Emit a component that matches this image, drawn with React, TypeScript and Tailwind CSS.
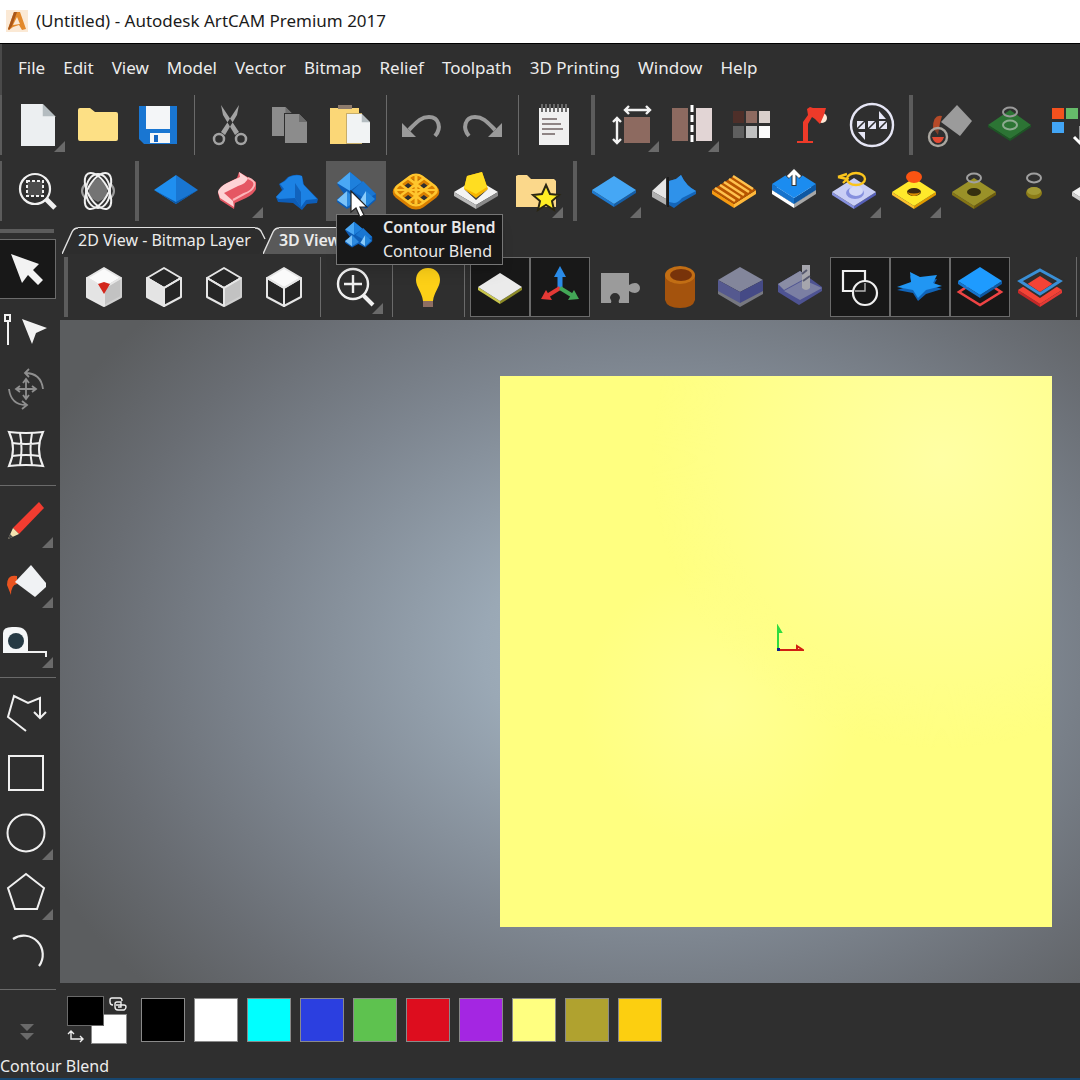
import { useState } from "react";
import type { ReactNode } from "react";
import clsx from "clsx";

interface Tool {
  label: string;
  icon: ReactNode;
  flyout?: boolean;
  active?: boolean;
}

const menus = ["File", "Edit", "View", "Model", "Vector", "Bitmap", "Relief", "Toolpath", "3D Printing", "Window", "Help"];

const swatches = [
  { name: "Black", color: "bg-black" },
  { name: "White", color: "bg-white" },
  { name: "Cyan", color: "bg-[#00ffff]" },
  { name: "Blue", color: "bg-[#2b3fe0]" },
  { name: "Green", color: "bg-[#5ec24f]" },
  { name: "Red", color: "bg-[#dd0d1e]" },
  { name: "Purple", color: "bg-[#a426e2]" },
  { name: "Light yellow", color: "bg-[#ffff80]" },
  { name: "Olive", color: "bg-[#b0a22f]" },
  { name: "Gold", color: "bg-[#fccf10]" },
];

/* ---------- shared icon parts ---------- */

function Page({ x, y, w, h, fill, fold }: { x: number; y: number; w: number; h: number; fill: string; fold: string }) {
  const c = w * 0.36;
  return (
    <>
      <path d={`M${x} ${y}H${x + w - c}L${x + w} ${y + c}V${y + h}H${x}Z`} fill={fill} />
      <path d={`M${x + w - c} ${y}V${y + c}H${x + w}Z`} fill={fold} />
    </>
  );
}

function Plate({ top, left, right, y = 16, h = 4 }: { top: string; left: string; right: string; y?: number; h?: number }) {
  return (
    <>
      <path d={`M8 ${y + 14}L30 ${y + 28}V${y + 28 + h}L8 ${y + 14 + h}Z`} fill={left} />
      <path d={`M52 ${y + 14}L30 ${y + 28}V${y + 28 + h}L52 ${y + 14 + h}Z`} fill={right} />
      <path d={`M30 ${y}L52 ${y + 14}L30 ${y + 28}L8 ${y + 14}Z`} fill={top} />
    </>
  );
}

function Cube({ faces }: { faces: [boolean, boolean, boolean] }) {
  const [top, left, right] = faces;
  return (
    <g stroke="#e6e6e6" strokeWidth="2" strokeLinejoin="round">
      <path d="M30 11L47 21L30 31L13 21Z" fill={top ? "#fafafa" : "#262626"} />
      <path d="M13 21L30 31V49L13 40Z" fill={left ? "#e4e4e4" : "#262626"} />
      <path d="M47 21L30 31V49L47 40Z" fill={right ? "#c2c2c2" : "#262626"} stroke={right ? "#cfcfcf" : "#e6e6e6"} />
      <path d="M13 21L30 31L47 21M30 31V49" fill="none" />
    </g>
  );
}

const contourBlend = (
  <>
    <path d="M24 11L36 21L50 33V39L40 48L30 43L21 48L11 41V38L18 33L11 23Z" fill="#0d5cb5" />
    <path d="M24 11L11 22L24 30Z" fill="#4aa8f5" />
    <path d="M24 11L36 21L24 30Z" fill="#1e80dc" />
    <path d="M37 20L50 33L40 38L26 30Z" fill="#1976d2" />
    <path d="M21 30L11 39L21 46Z" fill="#7ac2f8" />
    <path d="M21 30L31 40L21 46Z" fill="#2c8ae0" />
    <path d="M40 30L33 41L40 46Z" fill="#8accfb" />
    <path d="M40 30L49 38L40 46Z" fill="#2486dc" />
  </>
);

const redoArrow = (
  <>
    <path d="M17 41C10 33 13 22 23 22C32 22 36 28 43 35" fill="none" stroke="#9a9a9a" strokeWidth="4" />
    <path d="M50 28V42H36Z" fill="#9a9a9a" />
  </>
);

const weave = (
  <>
    <rect x="-15" y="-15" width="30" height="30" rx="7" />
    <path d="M-15 -5H15M-15 5H15M-5 -15V15M5 -15V15M-12 -12L12 12M12 -12L-12 12" />
  </>
);

/* ---------- toolbar contents ---------- */

const fileTools: Tool[][] = [
  [
    { label: "New", flyout: true, icon: <Page x={13} y={9} w={34} h={42} fill="#eceff1" fold="#b4bcc0" /> },
    { label: "Open", icon: <path d="M10 15Q10 13 12 13H22L27 17H48Q50 17 50 19V44Q50 46 48 46H12Q10 46 10 44Z" fill="#fde085" /> },
    {
      label: "Save",
      icon: (
        <>
          <path d="M11 11H49V49H16L11 44Z" fill="#1976d2" />
          <path d="M18 11H42V34H18Z" fill="#f4f6f8" />
          <path d="M22 38H42V48H22Z" fill="#f4f6f8" />
          <path d="M26 40H30V47H26Z" fill="#1565c0" />
        </>
      ),
    },
  ],
  [
    {
      label: "Cut",
      icon: (
        <>
          <path d="M21 10L23 20L35 40L39 37ZM39 10L37 20L25 40L21 37Z" fill="#a3a3a3" />
          <circle cx="19" cy="44" r="5" fill="none" stroke="#a3a3a3" strokeWidth="2.5" />
          <circle cx="41" cy="44" r="5" fill="none" stroke="#a3a3a3" strokeWidth="2.5" />
        </>
      ),
    },
    {
      label: "Copy",
      icon: (
        <>
          <Page x={12} y={12} w={21} h={29} fill="#8c8c8c" fold="#707070" />
          <path d="M24 18H39L48 27V49H24Z" fill="#2f2f2f" />
          <Page x={25} y={19} w={22} h={29} fill="#8c8c8c" fold="#6c6c6c" />
        </>
      ),
    },
    {
      label: "Paste",
      icon: (
        <>
          <path d="M10 13H39V49H10Z" fill="#fbd777" />
          <path d="M18 10H32V14H18Z" fill="#8d7b6c" />
          <path d="M26 18H42V49H26Z" fill="#c7ad6a" />
          <Page x={27} y={19} w={23} h={29} fill="#f1f3f4" fold="#b4bcc0" />
        </>
      ),
    },
  ],
  [
    { label: "Undo", icon: <g transform="translate(60 0) scale(-1 1)">{redoArrow}</g> },
    { label: "Redo", icon: redoArrow },
  ],
  [
    {
      label: "Notes",
      icon: (
        <>
          <path d="M15 13H45V50H15Z" fill="#f0f0f0" />
          <path d="M18 9V17M22 9V17M26 9V17M30 9V17M34 9V17M38 9V17M42 9V17" stroke="#6b6b6b" strokeWidth="2" />
          <path d="M18 24H33M18 29H37M18 34H39M18 39H31" stroke="#8f8585" strokeWidth="2" />
        </>
      ),
    },
  ],
];

const modelTools: Tool[] = [
  {
    label: "Set Model Size",
    flyout: true,
    icon: (
      <>
        <path d="M22 22H48V48H22Z" fill="#8d6a60" />
        <path d="M23 15H48M27 11L23 15L27 19M44 11L48 15L44 19M15 23V48M11 27L15 23L19 27M11 44L15 48L19 44" fill="none" stroke="#f2f2f2" strokeWidth="2.4" />
      </>
    ),
  },
  {
    label: "Mirror Model",
    flyout: true,
    icon: (
      <>
        <path d="M10 13H26V46H10Z" fill="#8d6a60" />
        <path d="M34 13H50V46H34Z" fill="#e2d5d5" />
        <path d="M30 10V50" stroke="#ffffff" strokeWidth="3" strokeDasharray="7 3" />
      </>
    ),
  },
  {
    label: "Greyscale",
    icon: (
      <>
        <path d="M11 16H22V28H11Z" fill="#4e2f29" />
        <path d="M24 16H35V28H24Z" fill="#8d6a60" />
        <path d="M37 16H48V28H37Z" fill="#d9cfcb" />
        <path d="M11 31H22V43H11Z" fill="#5f5f5f" />
        <path d="M24 31H35V43H24Z" fill="#c0c0c0" />
        <path d="M37 31H48V43H37Z" fill="#fafafa" />
      </>
    ),
  },
  {
    label: "Lights and Material",
    icon: (
      <>
        <circle cx="40" cy="23" r="5" fill="#ffe9d6" />
        <path d="M25 14L28 12L31 13L44 13L42 20L38 29L33 24L30 22L26 29V46H31V48H15V46H21V27L26 20Z" fill="#ee3a29" />
      </>
    ),
  },
  {
    label: "Nesting",
    icon: (
      <>
        <circle cx="30" cy="30" r="21" fill="none" stroke="#e6e6f5" strokeWidth="2.4" />
        <path d="M15 26H23V34H15ZM26 26H34V34H26ZM37 26H45V34H37ZM37 16L44 24H37ZM16 37H23V45Z" fill="#e6e6f5" />
        <path d="M15 34L23 26M26 34L34 26M37 34L45 26" stroke="#2f2f2f" strokeWidth="1.6" />
      </>
    ),
  },
];

const colorTools: Tool[] = [
  {
    label: "Flood Fill Vector",
    icon: (
      <>
        <path d="M37 10L52 26L40 41L21 27Z" fill="#9b9b9b" />
        <path d="M22 21Q13 19 13 33L18 40L20 28Z" fill="#b64a28" />
        <circle cx="18" cy="42" r="9" fill="#2f2f2f" fillOpacity="0.4" stroke="#aaa69f" strokeWidth="2.4" />
        <path d="M12 42H24Q22 48 18 48Q14 48 12 42Z" fill="#e24a33" />
      </>
    ),
  },
  {
    label: "Vector to Bitmap",
    icon: (
      <>
        <path d="M30 15L51 30L30 44L8 30Z" fill="#2c7434" />
        <path d="M8 30L30 44L51 30V32L30 46L8 32Z" fill="#1d5625" />
        <ellipse cx="30" cy="17" rx="7" ry="4.5" fill="none" stroke="#9a9a9a" strokeWidth="2" />
        <ellipse cx="30" cy="30" rx="7" ry="4.5" fill="none" stroke="#8dab90" strokeWidth="2" />
      </>
    ),
  },
  {
    label: "Reduce Colours",
    icon: (
      <>
        <path d="M12 13H24V24H12Z" fill="#f4511e" />
        <path d="M26 13H38V24H26Z" fill="#66bb6a" />
        <path d="M12 27H24V38H12Z" fill="#42a5f5" />
        <path d="M41 31V49M34 42L41 49L48 42" fill="none" stroke="#fff" strokeWidth="3" />
      </>
    ),
  },
];

const zoomTools: Tool[] = [
  {
    label: "Zoom to Selection",
    icon: (
      <>
        <circle cx="27" cy="28" r="15" fill="none" stroke="#f0f0f0" strokeWidth="2.2" />
        <path d="M38 38L47 47" stroke="#f0f0f0" strokeWidth="5" />
        <path d="M19 20H35V35H19Z" fill="#4c4c4c" stroke="#f0f0f0" strokeWidth="2" strokeDasharray="3 2" />
      </>
    ),
  },
  {
    label: "Rotate View",
    icon: (
      <g fill="none" stroke="#f0f0f0" strokeWidth="2">
        <path d="M30 17L39 24V36L30 41L21 36V24Z" fill="#747474" stroke="none" />
        <path d="M18 22Q10 30 18 38M42 22Q50 30 42 38" stroke="#9c9c9c" />
        <ellipse cx="30" cy="30" rx="20" ry="10" transform="rotate(60 30 30)" />
        <ellipse cx="30" cy="30" rx="20" ry="10" transform="rotate(-60 30 30)" />
        <ellipse cx="30" cy="30" rx="12" ry="17" />
      </g>
    ),
  },
];

const reliefTools: Tool[] = [
  {
    label: "Shape Editor",
    icon: (
      <>
        <path d="M30 14L8 29L30 43Z" fill="#1f8ff0" />
        <path d="M30 14L52 29L30 43Z" fill="#1976d2" />
        <path d="M8 29L30 43L52 29L30 41Z" fill="#0d57a5" />
      </>
    ),
  },
  {
    label: "Two Rail Sweep",
    flyout: true,
    icon: (
      <>
        <path d="M33 11L50 21V28Q48 33 40 37L29 42L28 48L14 39L12 32Q13 26 21 22L31 17Z" fill="#e55763" />
        <path d="M33 11L42 17Q41 22 32 25L18 32L27 40L28 46L14 37L12 31Q13 26 21 22L34 16Z" fill="#fdd3d5" />
        <path d="M42 17Q50 20 48 25Q46 30 38 33L27 39" fill="none" stroke="#fbb4b8" strokeWidth="2" />
      </>
    ),
  },
  {
    label: "Spin",
    icon: (
      <>
        <path d="M10 36L16 29L13 23Q19 20 22 16Q30 12 36 15L38 24L52 38L51 42L41 43L36 49L27 42L12 41Z" fill="#0d5db8" />
        <path d="M10 36L18 28L14 23Q20 20 23 16Q30 13 36 15L37 23L51 38L40 39L35 46L29 37L13 38Z" fill="#1c82e4" />
        <path d="M29 22L29 37L35 46V31Z" fill="#1163bd" />
      </>
    ),
  },
  { label: "Contour Blend", icon: contourBlend },
  {
    label: "Weave Wizard",
    icon: (
      <>
        <g transform="translate(30 31) scale(1.12 0.84) rotate(45)" fill="none" stroke="#d97f00" strokeWidth="5">
          {weave}
        </g>
        <g transform="translate(30 29) scale(1.12 0.84) rotate(45)" fill="none" stroke="#ffc62e" strokeWidth="2.6">
          {weave}
        </g>
      </>
    ),
  },
  {
    label: "Emboss",
    icon: (
      <>
        <path d="M30 18L52 31L30 44L8 31Z" fill="#f3f3f3" />
        <path d="M8 31L30 44V48L8 35Z" fill="#b9b9b9" />
        <path d="M52 31L30 44V48L52 35Z" fill="#8a8a8a" />
        <path d="M18 28L30 36L42 28L30 39Z" fill="#3a3a3a" />
        <path d="M21 15L36 11L42 28L30 37L18 28Z" fill="#f7b500" />
        <path d="M21 15L36 11L41 26L30 33L18 27Z" fill="#ffdd21" />
      </>
    ),
  },
  {
    label: "Relief Library",
    flyout: true,
    icon: (
      <>
        <path d="M10 15L12 14H21L25 18H48L50 20V46H10Z" fill="#fbd88b" />
        <path d="M40 24L44 33L53 34L46 40L48 49L40 44L32 49L34 40L27 34L36 33Z" fill="#ffee24" stroke="#2a2613" strokeWidth="2" />
      </>
    ),
  },
];

const modelingTools: Tool[] = [
  { label: "Create Plane", flyout: true, icon: <Plate top="#45a7f5" left="#1e79cf" right="#155fa9" y={15} h={3} /> },
  {
    label: "Mirror Relief",
    icon: (
      <>
        <path d="M22 17L8 30L22 38Z" fill="#e6e6e6" />
        <path d="M8 30L22 38V44L8 36Z" fill="#b0b0b0" />
        <path d="M25 20L32 18L37 14Q42 25 52 30V33L38 41L30 47L25 44Z" fill="#1465b8" />
        <path d="M25 20L32 18L37 14Q42 25 52 30L38 37Q34 42 30 42L25 41Z" fill="#2f92ea" />
        <path d="M24 16V46" stroke="#1b1b1b" strokeWidth="2" />
      </>
    ),
  },
  {
    label: "Texture Relief",
    icon: (
      <>
        <Plate top="#b85500" left="#f59a12" right="#ffb83a" y={15} />
        <path d="M31 15L11 28M35 18L15 31M40 21L20 34M44 24L24 37M49 27L29 40" stroke="#ffc14d" strokeWidth="2.6" transform="translate(60 0) scale(-1 1)" />
      </>
    ),
  },
  {
    label: "Offset Relief",
    icon: (
      <>
        <Plate top="#f3f3f3" left="#ffffff" right="#a8a8a8" y={15} h={4} />
        <Plate top="#1b8cf0" left="#1673cc" right="#0e58a3" y={9} h={6} />
        <path d="M30 25V9M23 16L30 9L37 16" fill="none" stroke="#333" strokeWidth="5" />
        <path d="M30 24V10M24 16L30 10L36 16" fill="none" stroke="#fff" strokeWidth="3" />
      </>
    ),
  },
  {
    label: "Paste Relief Along Curve",
    flyout: true,
    icon: (
      <>
        <Plate top="#c9cef5" left="#8690de" right="#5660b8" y={17} h={3} />
        <ellipse cx="31" cy="32" rx="9" ry="6" fill="#8690de" />
        <ellipse cx="32" cy="30" rx="7" ry="5" fill="#d5daf8" />
        <ellipse cx="32" cy="18" rx="9" ry="6" fill="none" stroke="#fbc51c" strokeWidth="2.4" />
        <path d="M14 16L23 18L19 22M14 16L23 13" fill="none" stroke="#fbc51c" strokeWidth="2.4" />
      </>
    ),
  },
  {
    label: "Merge Relief",
    flyout: true,
    icon: (
      <>
        <Plate top="#ffe92b" left="#fbc02d" right="#e09a00" y={17} h={3} />
        <ellipse cx="30" cy="31" rx="7" ry="4" fill="#3b2a10" />
        <path d="M23 31Q30 39 37 31Q30 34 23 31Z" fill="#d98c00" />
        <ellipse cx="30" cy="16" rx="8" ry="6" fill="#fb5412" />
      </>
    ),
  },
  {
    label: "Cut Relief Inside Vector",
    icon: (
      <>
        <Plate top="#9a9128" left="#857516" right="#6d5c0d" y={17} h={3} />
        <ellipse cx="30" cy="31" rx="7" ry="4" fill="#35300f" />
        <ellipse cx="30" cy="17" rx="7" ry="4.5" fill="none" stroke="#a0a0a0" strokeWidth="2" />
      </>
    ),
  },
  {
    label: "Keep Relief Inside Vector",
    icon: (
      <>
        <ellipse cx="30" cy="32" rx="8" ry="6" fill="#8c7c18" />
        <ellipse cx="30" cy="30" rx="7" ry="4" fill="#a39a34" />
        <ellipse cx="30" cy="17" rx="7" ry="4.5" fill="none" stroke="#a0a0a0" strokeWidth="2" />
      </>
    ),
  },
  { label: "Reset Relief", icon: <Plate top="#f3f3f3" left="#d0d0d0" right="#9a9a9a" y={17} h={4} /> },
];

const viewTools: Tool[][] = [
  [
    {
      label: "Isometric View",
      icon: (
        <>
          <Cube faces={[true, true, true]} />
          <path d="M24 27L30 25L36 27L30 37Z" fill="#d3271c" />
        </>
      ),
    },
    { label: "View Along X", icon: <Cube faces={[false, true, false]} /> },
    { label: "View Along Y", icon: <Cube faces={[false, false, true]} /> },
    { label: "View Along Z", icon: <Cube faces={[true, false, false]} /> },
  ],
  [
    {
      label: "Zoom In",
      flyout: true,
      icon: (
        <>
          <circle cx="27" cy="27" r="15" fill="none" stroke="#f0f0f0" strokeWidth="2.4" />
          <path d="M27 18V36M18 27H36" stroke="#f0f0f0" strokeWidth="2.4" />
          <path d="M37 38L47 48" stroke="#f0f0f0" strokeWidth="4" />
        </>
      ),
    },
  ],
  [
    {
      label: "Lighting",
      icon: (
        <>
          <path d="M30 11C38 11 42 17 42 23C42 30 36 35 35 44H25C24 35 18 30 18 23C18 17 22 11 30 11Z" fill="#fdd017" />
          <path d="M25 44H35V50H25Z" fill="#8d6e63" />
        </>
      ),
    },
  ],
  [
    { label: "Show Zero Plane", active: true, icon: <Plate top="#ebebeb" left="#c9c64c" right="#8c8a27" y={16} h={3} /> },
    {
      label: "Show Origin",
      active: true,
      icon: (
        <>
          <path d="M30 32V15" stroke="#2a8be8" strokeWidth="5" />
          <path d="M30 9L36 20H24Z" fill="#2a8be8" />
          <path d="M30 31L17 39" stroke="#e53935" strokeWidth="4" />
          <path d="M11 42L16 33L22 43Z" fill="#e53935" />
          <path d="M30 31L43 39" stroke="#43a857" strokeWidth="4" />
          <path d="M49 42L44 33L38 43Z" fill="#43a857" />
        </>
      ),
    },
    {
      label: "Show Puzzle Part",
      icon: (
        <path d="M11 16H39V28Q42 26 45 26A5 5 0 0 1 45 36Q42 36 39 34V46H29Q28 44 30 41A5 5 0 1 0 20 41Q22 44 21 46H11Z" fill="#9b9b9b" />
      ),
    },
    {
      label: "Rotary Material",
      icon: (
        <>
          <path d="M15 18V43Q17 51 30 51Q43 51 45 43V18Z" fill="#a4530d" />
          <ellipse cx="30" cy="18" rx="15" ry="9" fill="#c26e14" />
          <ellipse cx="31" cy="18" rx="11" ry="6" fill="#78330a" />
        </>
      ),
    },
    {
      label: "Material Block",
      icon: (
        <>
          <path d="M30 10L53 23L30 35L8 23Z" fill="#83869b" />
          <path d="M8 23L30 35V49L8 36Z" fill="#55598f" />
          <path d="M53 23L30 35V49L53 36Z" fill="#454a86" />
          <path d="M8 34L30 46L53 34V37L30 50L8 37Z" fill="#777880" />
        </>
      ),
    },
    {
      label: "Simulate Toolpath",
      icon: (
        <>
          <path d="M8 27L30 14L52 30V34L29 48L8 35Z" fill="#4e5392" />
          <path d="M8 27L30 14L34 17V22L14 33Z" fill="#8a8da5" />
          <path d="M14 34L34 23L52 31L30 43Z" fill="#7b7fa3" />
          <path d="M32 8H40V31Q36 35 32 31Z" fill="#a6a6ad" />
          <path d="M32 17L37 13M33 24L40 19" stroke="#55586e" strokeWidth="2" />
        </>
      ),
    },
    {
      label: "Show Vectors",
      active: true,
      icon: (
        <>
          <path d="M13 14H35V34H13Z" fill="none" stroke="#f0f0f0" strokeWidth="2.2" />
          <circle cx="35" cy="36" r="12" fill="#181818" stroke="#f0f0f0" strokeWidth="2.2" />
          <path d="M25 34H35V26" fill="none" stroke="#b5b5b5" strokeWidth="1.4" />
        </>
      ),
    },
    {
      label: "Show Bitmap",
      active: true,
      icon: (
        <>
          <path d="M20 19L30 24L47 22L43 29L52 32L36 37L28 44L23 36L7 33L22 28Z" fill="#1164b8" />
          <path d="M20 15L30 20L47 18L43 26L52 29L36 33L28 41L23 33L7 30L21 25Z" fill="#2196f3" />
        </>
      ),
    },
    {
      label: "Show Relief Layer",
      active: true,
      icon: (
        <>
          <path d="M30 21L51 35L30 48L9 35Z" fill="none" stroke="#ef4444" strokeWidth="2.6" />
          <Plate top="#1e9bff" left="#1673cc" right="#0e58a3" y={10} h={3} />
        </>
      ),
    },
    {
      label: "Show Composite Relief",
      icon: (
        <>
          <Plate top="#f44336" left="#c62828" right="#e53935" y={19} h={3} />
          <path d="M30 12L51 24L30 38L9 24Z" fill="none" stroke="#2f2f2f" strokeWidth="5" />
          <path d="M30 13L50 24L30 37L10 24Z" fill="none" stroke="#3a8fd6" strokeWidth="3" />
        </>
      ),
    },
  ],
];

const sideTools: Tool[][] = [
  [
    { label: "Select", active: true, icon: <path d="M11 15L39 25L33 31L43 41L38 46L28 36L22 44Z" fill="#f2f2f2" /> },
    {
      label: "Node Editing",
      icon: (
        <>
          <path d="M22 20L47 29L36 34L32 45Z" fill="#f2f2f2" />
          <path d="M5 16H10V22H5ZM8 23V46" fill="none" stroke="#f2f2f2" strokeWidth="2" />
        </>
      ),
    },
    {
      label: "Transform",
      icon: (
        <g fill="none" stroke="#8f8f8f" strokeWidth="1.8">
          <path d="M26 21V39M17 30H35M23 24L26 20L29 24M23 36L26 40L29 36M20 27L16 30L20 33M32 27L36 30L32 33" />
          <path d="M25 14Q41 14 43 30M29 10L25 14L29 18M9 30Q11 46 26 46M22 42L27 46L22 50" />
        </g>
      ),
    },
    {
      label: "Envelope Distortion",
      icon: (
        <g fill="none" stroke="#f0f0f0" strokeWidth="2">
          <path d="M9 13Q26 15 43 13Q35 30 43 47Q26 45 9 47Q17 30 9 13Z" />
          <path d="M20 14Q23 30 20 46M32 14Q29 30 32 46M12 24Q26 26 40 24M12 37Q26 35 40 37" />
        </g>
      ),
    },
  ],
  [
    {
      label: "Paint",
      flyout: true,
      icon: (
        <>
          <path d="M39 11L44 17L19 43L13 37Z" fill="#f23c30" />
          <path d="M13 37L19 43L8 48Z" fill="#f4e3b0" />
          <path d="M10 43L13 46L8 48Z" fill="#4a4a4a" />
        </>
      ),
    },
    {
      label: "Flood Fill",
      flyout: true,
      icon: (
        <>
          <path d="M17 25Q7 23 7 34L11 44Q11 34 17 33Z" fill="#ea5420" />
          <path d="M31 14L46 32V36L35 46L15 31Z" fill="#f0f2f4" />
        </>
      ),
    },
    {
      label: "Measure",
      flyout: true,
      icon: (
        <>
          <path d="M3 42V22Q3 16 12 16H16Q28 16 28 29V42Z" fill="#f5f7f8" />
          <circle cx="16" cy="30" r="8" fill="#263a44" />
          <path d="M27 41H46V46" fill="none" stroke="#f0f0f0" strokeWidth="2" />
        </>
      ),
    },
  ],
  [
    { label: "Polyline", icon: <path d="M26 48L8 34L14 13L28 20L40 15V34M34 29L40 35L46 29" fill="none" stroke="#f0f0f0" strokeWidth="2" /> },
    { label: "Rectangle", icon: <path d="M9 13H43V47H9Z" fill="none" stroke="#f0f0f0" strokeWidth="2" /> },
    { label: "Circle", flyout: true, icon: <circle cx="26" cy="30" r="18.5" fill="none" stroke="#f0f0f0" strokeWidth="2" /> },
    { label: "Polygon", flyout: true, icon: <path d="M26 11L44 25L37 46H15L8 25Z" fill="none" stroke="#f0f0f0" strokeWidth="2" /> },
    { label: "Arc", icon: <path d="M13 16A19 19 0 0 1 39 43" fill="none" stroke="#f0f0f0" strokeWidth="2.2" /> },
  ],
];

/* ---------- widgets ---------- */

function ToolButton({ tool, children }: { tool: Tool; children?: ReactNode }) {
  const hovered = tool.label === "Contour Blend";
  return (
    <div className="relative shrink-0">
      <button
        type="button"
        aria-label={tool.label}
        aria-pressed={tool.active}
        className={clsx("block size-15 border", tool.active ? "border-[#6b6b6b] bg-[#181818]" : "border-transparent", hovered && "bg-[#595959]")}
      >
        <svg viewBox="0 0 60 60" className="-m-px size-15" aria-hidden="true">
          {tool.icon}
          {tool.flyout && <path d="M57 46V57H46Z" fill="#6a6a6a" />}
        </svg>
      </button>
      {children}
    </div>
  );
}

function SideButton({ tool }: { tool: Tool }) {
  return (
    <button
      type="button"
      aria-label={tool.label}
      aria-pressed={tool.active}
      className={clsx("block h-15 w-14 border border-l-0", tool.active ? "border-[#6b6b6b] bg-[#181818]" : "border-transparent")}
    >
      <svg viewBox="0 0 56 60" className="-mt-px h-15 w-14" aria-hidden="true">
        {tool.icon}
        {tool.flyout && <path d="M53 46V57H42Z" fill="#6a6a6a" />}
      </svg>
    </button>
  );
}

function Separator() {
  return (
    <div className="flex w-3 shrink-0 justify-center">
      <div className="w-px bg-[#6a6a6a]" />
    </div>
  );
}

function Grip() {
  return (
    <div className="flex w-[18px] shrink-0 justify-center">
      <div className="w-1 bg-[#5c5c5c]" />
    </div>
  );
}

function Group({ tools }: { tools: Tool[] }) {
  return (
    <div className="flex shrink-0">
      {tools.map((tool) => (
        <ToolButton key={tool.label} tool={tool}>
          {tool.label === "Contour Blend" && <Tooltip />}
        </ToolButton>
      ))}
    </div>
  );
}

function Tooltip() {
  return (
    <>
      <div role="tooltip" className="absolute top-[53px] left-2.5 z-10 flex h-[51px] gap-2 border border-[#767676] bg-[#181818] pr-1.5 pl-1.5 shadow-lg">
        <svg viewBox="8 8 46 44" className="mt-1 h-8 w-8" aria-hidden="true">
          {contourBlend}
        </svg>
        <div className="text-base leading-6 whitespace-nowrap text-[#e8e8e8]">
          <div className="font-semibold">Contour Blend</div>
          <div>Contour Blend</div>
        </div>
      </div>
      <svg viewBox="0 0 18 28" className="absolute top-[29px] left-6 z-20 h-7 w-[18px]" aria-hidden="true">
        <path d="M1 1V22L6 18L10 27L14 25L10 17H17Z" fill="#fff" stroke="#222" strokeWidth="1.2" />
      </svg>
    </>
  );
}

function Tab({ label, selected, onSelect }: { label: string; selected: boolean; onSelect: () => void }) {
  const fill = selected ? "#595959" : "#2d2d2d";
  return (
    <button type="button" role="tab" aria-selected={selected} onClick={onSelect} className="-mr-1 flex h-[27px]">
      <svg viewBox="0 0 16 27" className="h-[27px] w-4" aria-hidden="true">
        <path d="M0 27L10 5Q12 1 16 1V27Z" fill={fill} />
        <path d="M0 27L10 5Q12 1 16 1" fill="none" stroke="#e0e0e0" strokeWidth="1.4" />
      </svg>
      <span className={clsx("border-t border-[#e0e0e0] pr-1 text-base leading-6 whitespace-nowrap", selected ? "bg-[#595959] font-semibold" : "bg-[#2d2d2d]")}>{label}</span>
      <svg viewBox="0 0 12 27" className="h-[27px] w-3" aria-hidden="true">
        <path d="M0 1Q5 1 7 6L10 12L4 27H0Z" fill={fill} />
        <path d="M0 1Q5 1 7 6L10 12" fill="none" stroke="#e0e0e0" strokeWidth="1.4" />
      </svg>
    </button>
  );
}

/* ---------- page ---------- */

export default function App() {
  const [view, setView] = useState("3D View");

  return (
    <div className="flex min-h-screen flex-col overflow-hidden border-b-2 border-[#17466f] bg-[#2f2f2f] font-['Noto_Sans','Open_Sans',sans-serif] text-base text-[#ececec]">
      <header className="flex h-11 items-center gap-2 border-b border-black bg-white pb-0.5 pl-1.5 text-[#1b1b1b]">
        <svg viewBox="0 0 22 22" className="size-[22px]" aria-hidden="true">
          <path d="M0 0H22V22H0Z" fill="#fbe9d5" />
          <path d="M8 2H14L20 19L16 20L13 15L7 17L3 20L2 19Z" fill="#e3892b" />
          <path d="M11 7L14 14L7 15Z" fill="#fbe9d5" />
          <path d="M8 2H11L6 16L3 20L2 19Z" fill="#a9571a" />
        </svg>
        <h1 className="text-[17px]">(Untitled) - Autodesk ArtCAM Premium 2017</h1>
      </header>

      <nav className="flex h-[51px] items-center border-l-2 border-[#4a4a4a] pb-1 pl-[7px]">
        {menus.map((menu) => (
          <button key={menu} type="button" className="px-[9px] text-[17px] whitespace-nowrap">
            {menu}
          </button>
        ))}
      </nav>

      <div className="flex border-l-2 border-[#5c5c5c] pl-1.5">
        {fileTools.map((group, i) => (
          <div key={i} className="flex shrink-0">
            {i > 0 && <Separator />}
            <Group tools={group} />
          </div>
        ))}
        <Grip />
        <Group tools={modelTools} />
        <Grip />
        <Group tools={colorTools} />
      </div>

      <div className="mt-1.5 flex border-l-2 border-[#5c5c5c] pl-1.5">
        <Group tools={zoomTools} />
        <Grip />
        <Group tools={reliefTools} />
        <Grip />
        <Group tools={modelingTools} />
      </div>

      <div className="mt-1.5 flex flex-1">
        <aside className="flex w-15 shrink-0 flex-col">
          <div className="mt-0.5 mr-1.5 mb-1.5 h-1 bg-[#5c5c5c]" />
          {sideTools.map((group, i) => (
            <div key={i}>
              {group.map((tool) => (
                <SideButton key={tool.label} tool={tool} />
              ))}
              <div className="flex h-3 w-14 items-center">
                <div className="h-px w-full bg-[#6a6a6a]" />
              </div>
            </div>
          ))}
          <button type="button" aria-label="More tools" className="mt-7 ml-5 w-3.5">
            <svg viewBox="0 0 14 18" className="h-[18px] w-3.5" aria-hidden="true">
              <path d="M0 1H14L7 8ZM0 10H14L7 17Z" fill="#6a6a6a" />
            </svg>
          </button>
        </aside>

        <div className="flex min-w-0 flex-1 flex-col">
          <div role="tablist" className="flex pl-0.5">
            <Tab label="2D View - Bitmap Layer" selected={view === "2D View"} onSelect={() => setView("2D View")} />
            <Tab label="3D View" selected={view === "3D View"} onSelect={() => setView("3D View")} />
          </div>

          <div className="mt-[3px] flex pb-[3px]">
            <div className="mr-1.5 ml-1 w-1 shrink-0 bg-[#5c5c5c]" />
            {viewTools.map((group, i) => (
              <div key={i} className="flex shrink-0">
                {i > 0 && <Separator />}
                <Group tools={group} />
              </div>
            ))}
            <Separator />
          </div>

          <main className="flex flex-1 items-center justify-end bg-[radial-gradient(ellipse_66%_76%_at_58%_50%,#a9b8c6_0%,#9aa8b5_25%,#7d858f_58%,#696d73_82%,#5b5d5f_100%)] pr-7">
            <div className="relative aspect-square w-[55.6%] bg-[radial-gradient(circle_at_80%_15%,#ffffa4_0%,#ffff88_35%,transparent_45%),radial-gradient(circle_at_40%_60%,#ffff94_0%,#ffff80_30%)]">
              <svg viewBox="0 0 28 28" className="absolute bottom-1/2 left-1/2 size-7" aria-label="Origin">
                <path d="M2 26V3L5 8H2" fill="none" stroke="#2fdc3f" strokeWidth="2" />
                <path d="M2 26H27L21 22V26" fill="none" stroke="#d11f12" strokeWidth="2" />
                <path d="M1 24H4V27H1Z" fill="#10208a" />
              </svg>
            </div>
          </main>

          <div className="flex h-[72px] items-center gap-3.5 pt-0.5 pl-[7px]">
            <div className="relative h-12 w-15">
              <button type="button" aria-label="Secondary colour" className="absolute right-0 bottom-0 h-[30px] w-9 border border-[#8a8a8a] bg-white" />
              <button type="button" aria-label="Primary colour" className="absolute top-0 left-0 h-[30px] w-[37px] border border-[#6a6a6a] bg-black" />
              <svg viewBox="0 0 18 16" className="absolute top-0 right-0 h-4 w-[18px]" fill="none" stroke="#f0f0f0" strokeWidth="1.4" aria-hidden="true">
                <path d="M4 9Q1 9 1 6V4Q1 2 3 2H11Q13 2 13 5M7 9H15Q17 9 17 11T15 14H9Q6 14 6 11V8Q6 6 8 6H12V11H9" />
              </svg>
              <svg viewBox="0 0 18 16" className="absolute bottom-0 left-0 h-4 w-[18px]" fill="none" stroke="#f0f0f0" strokeWidth="1.4" aria-hidden="true">
                <path d="M4 3V11H16M1 6L4 3L7 6M13 8L16 11L13 14" />
              </svg>
            </div>
            <div className="flex gap-[9px]">
              {swatches.map((s) => (
                <button key={s.name} type="button" aria-label={s.name} className={clsx("size-11 border border-[#8a8a8a]", s.color)} />
              ))}
            </div>
          </div>
        </div>
      </div>

      <footer className="text-base leading-[23px]">Contour Blend</footer>
    </div>
  );
}
